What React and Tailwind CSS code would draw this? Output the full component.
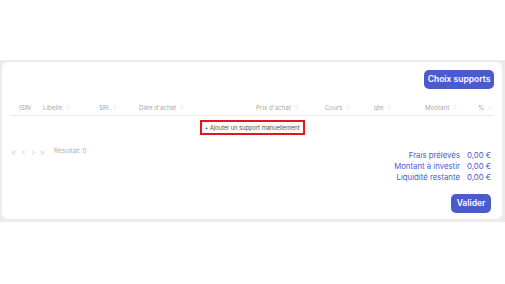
import { ChevronsLeft, ChevronLeft, ChevronRight, ChevronsRight, ChevronsUpDown } from 'lucide-react';

const columns = [
  { label: 'ISIN', w: 'w-[24px]', sort: false },
  { label: 'Libellé', w: 'w-[56px]', sort: true },
  { label: 'SRI', w: 'w-[40px]', sort: true },
  { label: "Date d'achat", w: 'w-[117px]', sort: true },
  { label: "Prix d'achat", w: 'w-[69px]', sort: true },
  { label: 'Cours', w: 'w-[49px]', sort: true },
  { label: 'qte', w: 'w-[51px]', sort: true },
  { label: 'Montant', w: 'w-[53px]', sort: true },
  { label: '%', w: 'w-[20px]', sort: true },
];

const totals = [
  ['Frais prélevés', '0,00 €'],
  ['Montant à investir', '0,00 €'],
  ['Liquidité restante', '0,00 €'],
];

export default function App() {
  return (
    <div className="w-[505px] h-[284px] bg-white font-['Inter',sans-serif]">
      <div className="pt-[60px]">
        <div className="bg-[#ececec] p-[2px] pr-[3px] pb-[3px]">
          <div className="bg-white rounded-md h-[157px] px-[6px] pt-[8px]">
            {/* Top action */}
            <div className="flex justify-end pr-[2px]">
              <button className="h-[19px] w-[70px] rounded-[5px] bg-[#4a5ccc] text-white text-[8.5px] font-semibold">
                Choix supports
              </button>
            </div>

            {/* Table header */}
            <div className="mt-[11px] mx-[2px] flex items-center h-[16px] border-b border-[#ececec] pl-[9px] text-[6.2px] text-[#a8a8a8]">
              {columns.map((c) => (
                <div key={c.label} className={`${c.w} flex items-center gap-[3px] shrink-0`}>
                  <span>{c.label}</span>
                  {c.sort && <ChevronsUpDown className="w-[6px] h-[6px] text-[#c4c4c4]" strokeWidth={1.5} />}
                </div>
              ))}
            </div>

            {/* Add row */}
            <div className="flex justify-center mt-[4px]">
              <div className="border-2 border-[#e4151f] h-[15px] w-[105px] flex items-center justify-center text-[6px] tracking-[-0.15px] text-[#555]">
                + Ajouter un support manuellement
              </div>
            </div>

            {/* Footer */}
            <div className="flex justify-between mt-[11px]">
              <div className="flex items-center pl-[2px] h-[12px] text-[#8596e4]">
                <ChevronsLeft className="w-[7px] h-[7px]" strokeWidth={1.6} />
                <ChevronLeft className="w-[7px] h-[7px] ml-[3px]" strokeWidth={1.6} />
                <ChevronRight className="w-[7px] h-[7px] ml-[3px]" strokeWidth={1.6} />
                <ChevronsRight className="w-[7px] h-[7px] ml-[2px]" strokeWidth={1.6} />
                <span className="ml-[8px] text-[6.5px] text-[#acacac]">Résultat: 0</span>
              </div>
              <div className="flex flex-col items-end pr-[5px] pt-[4px]">
                <div className="flex flex-col text-[7.8px] text-[#4a5ccc]">
                  {totals.map(([k, v]) => (
                    <div key={k} className="flex justify-end h-[11px] items-center">
                      <span>{k}</span>
                      <span className="w-[31px] text-right">{v}</span>
                    </div>
                  ))}
                </div>
                <button className="mt-[11px] h-[19px] w-[40px] rounded-[5px] bg-[#4a5ccc] text-white text-[8.5px] font-semibold">
                  Valider
                </button>
              </div>
            </div>
          </div>
        </div>
      </div>
    </div>
  );
}
